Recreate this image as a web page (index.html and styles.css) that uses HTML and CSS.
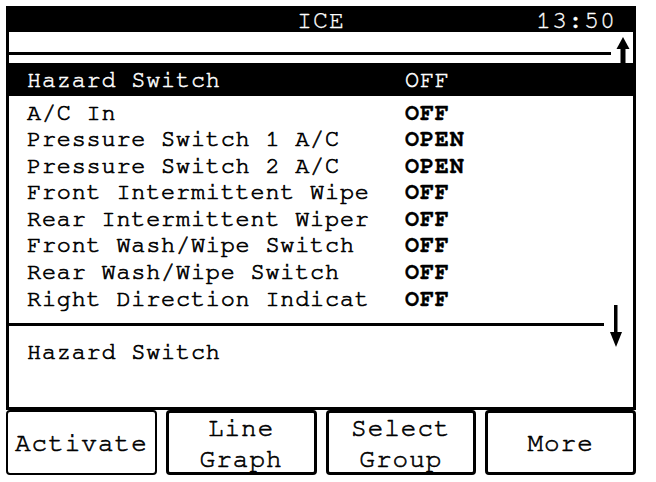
FILE: index.html
```html
<!DOCTYPE html>
<html lang="en">
<head>
<meta charset="UTF-8">
<title>ICE</title>
<link rel="stylesheet" href="styles.css">
</head>
<body>
  <div class="screen">
    <div class="frame">
      <div class="header">
        <span class="title">ICE</span>
        <span class="clock">13:50</span>
      </div>

      <div class="strip">
        <div class="rule"></div>
        <svg class="arrow-up" width="14" height="26" viewBox="0 0 14 26">
          <polygon points="7,0 13.5,12 0.5,12" fill="#000"/>
          <rect x="4.5" y="10" width="5" height="16" fill="#000"/>
        </svg>
      </div>

      <div class="row selected">
        <span class="name">Hazard Switch</span>
        <span class="value">OFF</span>
      </div>

      <div class="list">
        <div class="row"><span class="name">A/C In</span><span class="value">OFF</span></div>
        <div class="row"><span class="name">Pressure Switch 1 A/C</span><span class="value">OPEN</span></div>
        <div class="row"><span class="name">Pressure Switch 2 A/C</span><span class="value">OPEN</span></div>
        <div class="row"><span class="name">Front Intermittent Wipe</span><span class="value">OFF</span></div>
        <div class="row"><span class="name">Rear Intermittent Wiper</span><span class="value">OFF</span></div>
        <div class="row"><span class="name">Front Wash/Wipe Switch</span><span class="value">OFF</span></div>
        <div class="row"><span class="name">Rear Wash/Wipe Switch</span><span class="value">OFF</span></div>
        <div class="row"><span class="name">Right Direction Indicat</span><span class="value">OFF</span></div>
      </div>

      <div class="separator">
        <div class="rule"></div>
        <svg class="arrow-down" width="14" height="42" viewBox="0 0 14 42">
          <rect x="5" y="0" width="3.5" height="30" fill="#000"/>
          <polygon points="1,27 13,27 7,42" fill="#000"/>
        </svg>
      </div>

      <div class="detail">Hazard Switch</div>
    </div>

    <div class="buttons">
      <div class="btn thin">Activate</div>
      <div class="btn">Line<br>Graph</div>
      <div class="btn">Select<br>Group</div>
      <div class="btn">More</div>
    </div>
  </div>
</body>
</html>
```

FILE: styles.css
```css
body {
  margin: 0;
  background: #fff;
  color: #000;
  font-family: 'Nimbus Mono PS', 'FreeMono', 'Courier', 'Liberation Mono', monospace;
}

.screen {
  width: 630px;
  margin: 6px 0 0 6px;
}

.frame {
  border: solid #000;
  border-width: 0 3px 3px 3px;
}

/* title bar */
.header {
  position: relative;
  height: 26px;
  background: #000;
  color: #fff;
  font-size: 25px;
  letter-spacing: 1px;
  line-height: 30px;
  text-align: center;
  -webkit-text-stroke: 0.3px #fff;
}

.header .clock {
  position: absolute;
  right: 17px;
  top: 0;
}

.strip {
  display: flex;
  height: 31px;
}

.strip .rule {
  flex: 1;
  height: 3px;
  margin-top: 20px;
  background: #000;
}

.arrow-up {
  flex: none;
  margin: 5px 3px 0 5px;
}

/* parameter rows */
.row {
  display: flex;
  align-items: flex-start;
  height: 26.6px;
  line-height: 24.6px;
  padding-left: 18px;
  font-size: 23.5px;
  letter-spacing: 0.8px;
  white-space: nowrap;
  -webkit-text-stroke: 0.7px #000;
}

.row .name {
  width: 378px;
}

.row .value {
  font-weight: bold;
  -webkit-text-stroke: 0.3px #000;
}

.row.selected {
  height: 33px;
  line-height: 34px;
  background: #000;
  color: #fff;
  -webkit-text-stroke: 0.5px #fff;
}

.row.selected .value {
  font-weight: normal;
  -webkit-text-stroke: 0.5px #fff;
}

.list {
  padding-top: 4.5px;
}

.separator {
  display: flex;
  height: 13px;
}

.separator .rule {
  flex: 1;
  height: 3px;
  margin-top: 10px;
  background: #000;
}

.arrow-down {
  flex: none;
  margin: -8px 10px 0 5px;
}

.detail {
  height: 81px;
  padding-left: 18px;
  padding-top: 13px;
  box-sizing: border-box;
  font-size: 23.5px;
  letter-spacing: 0.8px;
  line-height: 26px;
  -webkit-text-stroke: 0.7px #000;
}

/* soft keys */
.buttons {
  display: grid;
  grid-template-columns: repeat(4, 1fr);
  gap: 9px;
}

.btn {
  height: 65px;
  padding-top: 2px;
  border: 3px solid #000;
  border-radius: 4px;
  box-sizing: border-box;
  display: flex;
  align-items: center;
  justify-content: center;
  text-align: center;
  font-size: 26px;
  letter-spacing: 1px;
  line-height: 31px;
  -webkit-text-stroke: 0.6px #000;
}

.btn.thin {
  border-width: 2px;
}
```
